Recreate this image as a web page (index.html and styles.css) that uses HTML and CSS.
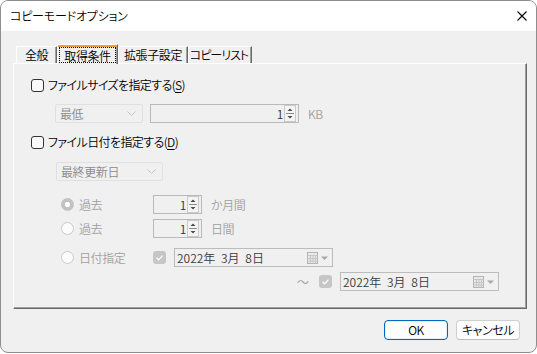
FILE: index.html
```html
<!DOCTYPE html>
<html lang="ja">
<head>
<meta charset="utf-8">
<link rel="stylesheet" href="styles.css">
</head>
<body>
<div class="window">
  <div class="titlebar">
    <span class="title">コピーモードオプション</span>
    <svg class="close" viewBox="0 0 10 10"><path d="M0.5 0.5 L9.5 9.5 M9.5 0.5 L0.5 9.5" stroke="#000" stroke-width="1.1" fill="none"/></svg>
  </div>
  <div class="client">
    <div class="tabs">
      <div class="tab tab-general">全般</div>
      <div class="tab tab-active"><span class="focus">取得条件</span></div>
      <div class="tab tab-ext">拡張子設定</div>
      <div class="tab tab-list">コピーリスト</div>
    </div>
    <div class="panel">
      <div class="row row-check first">
        <span class="cb"></span>
        <span class="label">ファイルサイズを指定する(<u>S</u>)</span>
      </div>
      <div class="row row-field size-row">
        <div class="combo combo-size"><span>最低</span><svg class="chev" viewBox="0 0 9 5"><path d="M0.5 0.5 L4.5 4.5 L8.5 0.5" stroke="#c4c4c4" fill="none"/></svg></div>
        <div class="spin spin-wide"><span class="val">1</span><svg class="spinbtn" viewBox="0 0 12 17"><rect x="0.5" y="0.5" width="11" height="16" fill="#f4f4f4" stroke="#c9c9c9"/><path d="M3.5 6 L6 3.5 L8.5 6 Z" fill="#4a4a4a"/><path d="M2 8.5 H10" stroke="#8a8a8a"/><path d="M3.5 11 L6 13.5 L8.5 11 Z" fill="#4a4a4a"/></svg></div>
        <span class="unit">KB</span>
      </div>
      <div class="row row-check date-check">
        <span class="cb"></span>
        <span class="label">ファイル日付を指定する(<u>D</u>)</span>
      </div>
      <div class="row row-field date-kind">
        <div class="combo combo-date"><span>最終更新日</span><svg class="chev" viewBox="0 0 9 5"><path d="M0.5 0.5 L4.5 4.5 L8.5 0.5" stroke="#c4c4c4" fill="none"/></svg></div>
      </div>
      <div class="row radio-row rr1">
        <div class="opt"><span class="radio on"></span><span class="dim">過去</span></div>
        <div class="spin spin-small"><span class="val">1</span><svg class="spinbtn" viewBox="0 0 12 17"><rect x="0.5" y="0.5" width="11" height="16" fill="#f4f4f4" stroke="#c9c9c9"/><path d="M3.5 6 L6 3.5 L8.5 6 Z" fill="#4a4a4a"/><path d="M2 8.5 H10" stroke="#8a8a8a"/><path d="M3.5 11 L6 13.5 L8.5 11 Z" fill="#4a4a4a"/></svg></div>
        <span class="unit">か月間</span>
      </div>
      <div class="row radio-row rr2">
        <div class="opt"><span class="radio"></span><span class="dim">過去</span></div>
        <div class="spin spin-small"><span class="val">1</span><svg class="spinbtn" viewBox="0 0 12 17"><rect x="0.5" y="0.5" width="11" height="16" fill="#f4f4f4" stroke="#c9c9c9"/><path d="M3.5 6 L6 3.5 L8.5 6 Z" fill="#4a4a4a"/><path d="M2 8.5 H10" stroke="#8a8a8a"/><path d="M3.5 11 L6 13.5 L8.5 11 Z" fill="#4a4a4a"/></svg></div>
        <span class="unit">日間</span>
      </div>
      <div class="row radio-row rr3">
        <div class="opt"><span class="radio"></span><span class="dim">日付指定</span></div>
        <span class="cb-dis"><svg viewBox="0 0 13 13"><path d="M3.5 6.8 L5.6 8.8 L9.5 4.6" stroke="#fff" stroke-width="1.2" fill="none"/></svg></span>
        <div class="datepick"><span class="dtext">2022年 3月 8日</span><svg class="cal" viewBox="0 0 22 12"><rect x="0.5" y="0.5" width="10" height="11" fill="#e9e9e9" stroke="#b4b4b4"/><path d="M0.5 3.5 H10.5 M0.5 6.5 H10.5 M0.5 9 H10.5 M3.5 3.5 V11.5 M6 3.5 V11.5 M8.5 3.5 V11.5" stroke="#c6c6c6"/><path d="M14 4.5 L21 4.5 L17.5 8 Z" fill="#a8a8a8"/></svg></div>
      </div>
      <div class="row range-row">
        <span class="tilde">〜</span>
        <span class="cb-dis"><svg viewBox="0 0 13 13"><path d="M3.5 6.8 L5.6 8.8 L9.5 4.6" stroke="#fff" stroke-width="1.2" fill="none"/></svg></span>
        <div class="datepick"><span class="dtext">2022年 3月 8日</span><svg class="cal" viewBox="0 0 22 12"><rect x="0.5" y="0.5" width="10" height="11" fill="#e9e9e9" stroke="#b4b4b4"/><path d="M0.5 3.5 H10.5 M0.5 6.5 H10.5 M0.5 9 H10.5 M3.5 3.5 V11.5 M6 3.5 V11.5 M8.5 3.5 V11.5" stroke="#c6c6c6"/><path d="M14 4.5 L21 4.5 L17.5 8 Z" fill="#a8a8a8"/></svg></div>
      </div>
    </div>
    <div class="buttons">
      <button class="btn btn-default">OK</button>
      <button class="btn">キャンセル</button>
    </div>
  </div>
</div>
</body>
</html>
```
FILE: styles.css
```css
* { box-sizing: border-box; }
html, body { margin: 0; padding: 0; }
body {
  width: 537px;
  height: 354px;
  background: #ffffff;
  font-family: "Noto Sans CJK JP", "Noto Sans", sans-serif;
  font-size: 12px;
  font-weight: 350;
  font-feature-settings: "palt";
  letter-spacing: -0.4px;
  color: #000;
}
.window {
  width: 537px;
  height: 353px;
  border: 1px solid #8e8e8e;
  border-radius: 8px;
  overflow: hidden;
  background: #f0f0f0;
  display: flex;
  flex-direction: column;
}
.titlebar {
  flex: none;
  height: 30px;
  background: #fff;
  display: flex;
  align-items: center;
  justify-content: space-between;
  padding: 0 9px 0 9px;
}
.title { line-height: 16px; letter-spacing: -0.2px; }
.close { width: 10px; height: 10px; display: block; }

.client { flex: 1; display: flex; flex-direction: column; }

.tabs {
  height: 32px;
  display: flex;
  align-items: flex-end;
  padding-left: 15px;
}
.tab {
  height: 17px;
  line-height: 15px;
  text-align: center;
  border-top: 1px solid #fff;
  border-left: 1px solid #fff;
  border-right: 1px solid #696969;
  box-shadow: inset -1px 0 0 #a0a0a0;
  white-space: nowrap;
}
.tab-general { width: 41px; }
.tab-active {
  width: 61px;
  height: 20px;
  margin-bottom: -1px;
  position: relative;
  z-index: 1;
  background: #f0f0f0;
  box-shadow: inset 0 2px 0 #f29c2f, inset -1px 0 0 #a0a0a0;
  padding: 2px 1px 0 1px;
}
.focus {
  display: block;
  height: 16px;
  line-height: 15px;
  border: 1px dotted #000;
}
.tab-ext { width: 70px; }
.tab-list { width: 64px; letter-spacing: -1px; padding-right: 2px; }

.panel {
  margin-left: 12px;
  width: 514px;
  height: 246px;
  border-top: 1px solid #fff;
  border-left: 1px solid #fff;
  border-right: 1px solid #696969;
  border-bottom: 1px solid #696969;
  box-shadow: inset -1px -1px 0 #a0a0a0;
  padding-left: 17px;
  display: flex;
  flex-direction: column;
}
.row { display: flex; align-items: center; flex: none; }
.row-check { height: 18px; }
.first { margin-top: 12px; }
.date-check { margin-top: 10px; }
.size-row { margin-top: 10px; height: 19px; padding-left: 24px; gap: 7px; }
.date-kind { margin-top: 11px; height: 19px; padding-left: 25px; }
.radio-row { height: 19px; padding-left: 30px; }
.rr1 { margin-top: 14px; }
.rr2 { margin-top: 5px; }
.rr3 { margin-top: 10px; }
.range-row { margin-top: 5px; height: 19px; padding-left: 266px; }

.cb {
  width: 13px; height: 13px;
  border: 1px solid #333;
  border-radius: 3px;
  background: #f9f9f9;
  margin-right: 4px;
  flex: none;
}
.label { line-height: 16px; white-space: nowrap; letter-spacing: -0.6px; }
.label u { text-underline-offset: 2px; }

.combo {
  height: 19px;
  border: 1px solid #e0e0e0;
  border-radius: 2px;
  background: #f0f0f0;
  color: #8a8a8a;
  display: flex;
  align-items: center;
  justify-content: space-between;
  padding: 0 6px 0 4px;
  line-height: 16px;
}
.combo-size { width: 88px; }
.combo-date { width: 107px; }
.chev { width: 9px; height: 5px; display: block; }

.spin {
  height: 19px;
  border: 1px solid #b9b9b9;
  background: #f0f0f0;
  display: flex;
  align-items: center;
  justify-content: flex-end;
  padding-right: 2px;
  color: #333;
}
.spin .val { line-height: 16px; margin-right: 1px; }
.spinbtn { width: 12px; height: 17px; display: block; }
.spin-wide { width: 149px; }
.spin-small { width: 49px; }
.unit { color: #a0a0a0; line-height: 16px; margin-left: 9px; }
.size-row .unit { margin-left: 2px; }

.opt { width: 92px; display: flex; align-items: center; gap: 5px; }
.dim { color: #a0a0a0; line-height: 16px; }
.radio {
  width: 13px; height: 13px;
  border-radius: 50%;
  border: 1px solid #c8c8c8;
  background: #fbfbfb;
  flex: none;
}
.radio.on {
  border-color: #c2c2c2;
  background: radial-gradient(circle, #fff 0 2.5px, #c2c2c2 3px);
}
.cb-dis {
  width: 13px; height: 13px;
  border-radius: 3px;
  background: #c6c6c6;
  flex: none;
  display: block;
}
.cb-dis svg { width: 13px; height: 13px; display: block; }
.rr3 .cb-dis { margin-right: 8px; }
.range-row .cb-dis { margin-right: 8px; }
.tilde { color: #a0a0a0; width: 22px; line-height: 16px; }

.datepick {
  width: 159px;
  height: 19px;
  border: 1px solid #bcbcbc;
  background: #f0f0f0;
  display: flex;
  align-items: center;
  justify-content: space-between;
  padding: 0 3px 0 2px;
}
.dtext { color: #3a3a3a; line-height: 16px; white-space: pre; letter-spacing: 0; word-spacing: 3px; }
.cal { width: 22px; height: 12px; display: block; }

.buttons {
  margin-top: 11px;
  display: flex;
  justify-content: flex-end;
  gap: 8px;
  padding-right: 16px;
}
.btn {
  width: 64px;
  height: 20px;
  padding: 0;
  font-family: inherit;
  font-size: 12px;
  font-weight: 350;
  font-feature-settings: "palt";
  letter-spacing: -0.4px;
  line-height: 16px;
  color: #000;
  background: #fdfdfd;
  border: 1px solid #d0d0d0;
  border-bottom-color: #bcbcbc;
  border-radius: 4px;
}
.btn-default {
  border: 1px solid #0067c0;
  box-shadow: inset 0 0 0 1px #e4eef8;
}
```
